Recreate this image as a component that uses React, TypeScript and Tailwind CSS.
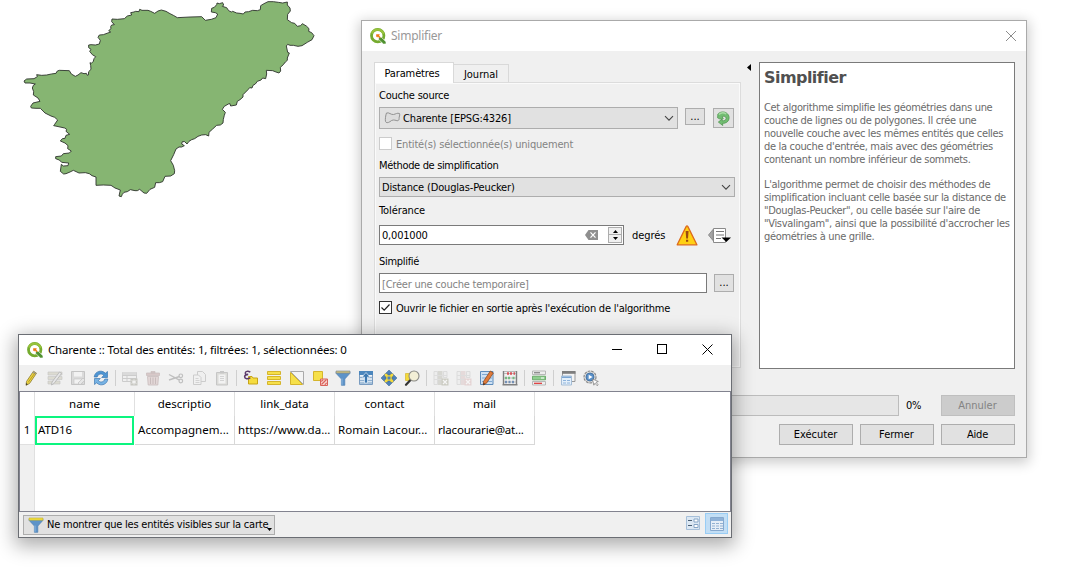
import type { ReactNode } from 'react';

const G = '#9a9a9a';

function Svg({ children, className = 'size-4', vb = '0 0 16 16' }: { children: ReactNode; className?: string; vb?: string }) {
  return (
    <svg viewBox={vb} className={`shrink-0 ${className}`} fill="none">
      {children}
    </svg>
  );
}

function Logo() {
  return (
    <Svg>
      <circle cx="7.7" cy="7.7" r="6.2" stroke="#75ab2f" strokeWidth="2.800" />
      <path d="M1.900 5.500A6.200 6.200 0 0 1 13.600 6" stroke="#98c23c" strokeWidth="2.200" />
      <path d="M8.600 9.200h2.700l4.700 4.600V16h-2.600L8.600 11.400z" fill="#4f9130" stroke="#fff" strokeWidth=".6" />
      <path d="M6.200 6.200h3l.8.9-1.100.4 1.800 1.800-1 1-1.800-1.800-.6 1.100-1.100-1z" fill="#ee7913" />
    </Svg>
  );
}

function CharenteMap() {
  return (
    <svg viewBox="0 0 960 615" className="block h-[205px] w-[320px]">
      <path
        fill="#86b572"
        stroke="#2e332c"
        strokeWidth="2.700"
        strokeLinejoin="round"
        d="M42 243L50 237L72 236L82 230L80 224L95 226L110 225L124 222L138 220L142 213L148 211L178 212L184 222L196 229L204 225L213 218L222 221L229 220L232 226L235 225L236 215L243 208L242 196L240 188L244 190L250 184L252 176L257 170L247 164L239 154L243 148L236 143L236 135L243 134L256 135L268 132L271 121L264 112L268 105L280 104L288 101L302 96L296 92L303 86L302 80L305 75L313 74L305 65L306 57L322 58L343 56L352 48L365 45L362 38L372 36L377 34L387 35L389 28L396 31L414 31L422 34L434 40L444 33L454 30L468 34L480 41L490 46L502 53L540 51L575 50L586 61L604 58L618 53L623 42L616 38L604 36L605 25L613 22L620 14L621 9L628 11L638 8L641 15L637 19L650 23L656 32L664 36L668 34L680 39L690 40L700 42L705 36L716 35L728 31L742 32L751 29L752 17L762 11L774 5L790 5L805 7L818 9L832 6L832 15L840 24L841 33L833 43L832 59L845 68L854 70L862 79L872 77L877 71L889 78L897 86L896 94L905 98L912 107L906 119L892 127L876 137L864 139L850 136L840 136L833 133L829 138L833 157L838 159L832 174L832 181L826 186L820 194L811 202L812 213L807 219L798 216L788 212L769 211L770 222L767 236L758 234L753 240L742 244L736 252L729 256L726 264L719 263L714 269L699 284L699 291L690 299L682 304L679 315L662 318L660 311L655 312L643 319L637 328L646 337L643 346L640 358L639 369L631 375L620 376L608 387L597 397L596 408L587 404L575 405L564 409L554 416L545 419L537 424L531 432L524 425L517 425L515 432L523 437L515 441L507 441L498 447L491 464L482 482L490 496L494 512L493 521L482 528L465 529L458 545L448 548L437 548L434 562L420 568L410 580L402 579L389 568L382 572L375 572L361 569L352 575L342 577L337 583L334 590L327 588L331 570L315 564L303 556L280 555L258 556L258 531L246 527L238 521L226 518L207 519L190 511L180 516L168 521L161 522L151 514L154 493L160 498L174 497L176 489L155 487L148 480L137 476L137 470L154 468L160 461L178 459L184 453L173 446L174 437L165 429L151 423L157 416L165 415L168 406L179 403L168 394L170 388L164 384L141 379L131 377L134 373L143 360L134 352L123 348L105 339L91 325L78 325L64 324L62 319L69 309L90 304L84 294L70 285L71 275L67 264L70 256L76 252L60 249L45 249Z"
      />
    </svg>
  );
}

function Chevron() {
  return (
    <Svg className="h-[7px] w-[10px]" vb="0 0 10 7">
      <path d="M1 1.2l4 4 4-4" stroke="#444" strokeWidth="1.1" />
    </Svg>
  );
}

function PushButton({ label, disabled = false, track = '' }: { label: string; disabled?: boolean; track?: string }) {
  return (
    <div
      className={`flex h-[21px] w-[74px] items-center justify-center border pr-px pt-px ${track} ${
        disabled ? 'border-[#bfbfbf] bg-[#cccccc] text-[#838383]' : 'border-[#adadad] bg-[#e1e1e1]'
      }`}
    >
      {label}
    </div>
  );
}

function SimplifyDialog() {
  return (
    <div className="absolute left-[361px] top-[20px] flex h-[438px] w-[666px] flex-col border border-[#aaaaaa] bg-[#f0f0f0] font-['DejaVu_Sans_Condensed','DejaVu_Sans',sans-serif] text-[11px] leading-[14px] text-black shadow-[0_3px_12px_2px_rgba(0,0,0,0.2)]">
      <div className="flex h-[30px] shrink-0 items-center bg-white pl-2 pr-[9px]">
        <Logo />
        <span className="ml-[5px] font-['Noto_Sans',sans-serif] text-[12px] tracking-[-0.24px] text-[#999]">Simplifier</span>
        <Svg className="ml-auto h-[12px] w-[12px]" vb="0 0 12 12">
          <path d="M1 1l10 10M11 1L1 11" stroke="#8c8c8c" />
        </Svg>
      </div>
      <div className="flex pl-[12px] pt-[11px]">
        <div className="flex w-[367px] flex-col">
          <div className="flex h-[21px] items-end">
            <div className="z-10 flex h-[21px] w-[80px] items-center justify-center border border-b-0 border-[#d9d9d9] bg-white pr-[4px] pt-px tracking-[-0.12px]">
              Paramètres
            </div>
            <div className="flex h-[19px] w-[55px] items-center justify-center border border-b-0 border-l-0 border-[#d9d9d9] pt-px">Journal</div>
          </div>
          <div className="-mt-px flex h-[286px] flex-col border border-[#dcdcdc] pl-[4px] shadow-[inset_0_0_0_1px_#fafafa]">
            <span className="mt-[6px] tracking-[-0.22px]">Couche source</span>
            <div className="mt-[4px] flex h-[22px]">
              <div className="flex h-[22px] w-[299px] items-center border border-[#adadad] bg-[#e1e1e1] pl-1 pr-[3px]">
                <Svg className="h-[13px] w-[17px]" vb="0 0 17 13">
                  <path d="M2.5 1C5 0 7 3 9.500 2.500S13 .700 15.500 1.500c.8 2-.6 3-.4 5 .2 1.300-.8 2.500-2.200 2.200-3-1-4.500-1.200-7 1C4 11 2 11 1.500 9.500c-.5-2 .2-6.500 1-8.500z" fill="#dcdcdc" stroke="#919191" />
                </Svg>
                <span className="ml-[2px] mt-[2px] flex-1 tracking-[-0.15px]">Charente [EPSG:4326]</span>
                <Chevron />
              </div>
              <div className="ml-[7px] mt-px flex h-[17px] w-[20px] items-center justify-center border border-[#adadad] bg-[#e1e1e1]">...</div>
              <div className="ml-[8px] mt-px flex h-[20px] w-[21px] items-center justify-center border border-[#adadad] bg-[#e1e1e1]">
                <Svg className="size-[15px]">
                  <path d="M2 3.200C4.500.6 8.500.4 11 2c3.800 2.300 4 7.500.5 10-1.300.9-3 1.200-4.500 1.200l.2 2.300L2.500 11.800 6.500 8.600l.2 1.900c2.200 0 4-.8 4.100-2.600C10.900 5.800 8.500 4.900 6.500 6.200l1.300 1.900C5.500 8.900 3.200 8.600 1.700 7.300z" fill="#72bd72" stroke="#4c944c" strokeWidth=".8" />
                  <path d="M3 3.800C5.300 1.600 8.500 1.600 10.800 3.200" stroke="#a9dca6" strokeWidth="1.400" />
                </Svg>
              </div>
            </div>
            <div className="mt-[8px] flex h-[13px] items-center text-[#838383]">
              <div className="size-[13px] border border-[#cccccc] bg-white" />
              <span className="ml-[4px] pt-[2px] tracking-[-0.19px]">Entité(s) sélectionnée(s) uniquement</span>
            </div>
            <span className="mt-[9px] tracking-[-0.34px]">Méthode de simplification</span>
            <div className="mt-[4px] flex h-[20px] w-[356px] items-center border border-[#adadad] bg-[#e1e1e1] pl-[2px] pr-[3px]">
              <span className="mt-[2px] flex-1 tracking-[-0.16px]">Distance (Douglas-Peucker)</span>
              <Chevron />
            </div>
            <span className="mt-[7px] tracking-[-0.1px]">Tolérance</span>
            <div className="mt-[7px] flex h-[20px] items-center">
              <div className="flex h-[20px] w-[245px] items-center border border-[#7a7a7a] bg-white pl-[2px] pr-px">
                <span className="mt-[2px] flex-1 tracking-[-0.2px]">0,001000</span>
                <Svg className="mr-[10px] h-[10px] w-[13px]" vb="0 0 13 10">
                  <path d="M0 5l3.500-5H13v10H3.500z" fill="#8f8f8f" />
                  <path d="M5.500 2.300l5 5.400M10.500 2.300l-5 5.400" stroke="#fff" strokeWidth="1.200" />
                </Svg>
                <div className="flex h-[16px] w-[14px] flex-col border border-[#adadad] bg-[#f0f0f0]">
                  <div className="flex h-[7px] items-center justify-center border-b border-[#adadad]">
                    <Svg className="h-[3px] w-[5px]" vb="0 0 5 3"><path d="M0 3L2.500 0 5 3z" fill="#000" /></Svg>
                  </div>
                  <div className="flex flex-1 items-center justify-center">
                    <Svg className="h-[3px] w-[5px]" vb="0 0 5 3"><path d="M0 0h5L2.500 3z" fill="#000" /></Svg>
                  </div>
                </div>
              </div>
              <span className="ml-[8px] mt-[2px] w-[33px] tracking-[-0.05px]">degrés</span>
              <Svg className="ml-[11px] h-[21px] w-[22px]" vb="0 0 22 21">
                <path d="M1.200 19.800L10.100 1.600Q11 .2 11.900 1.600L20.900 19.800z" fill="#ffd013" stroke="#dd6a1c" strokeWidth="1.300" strokeLinejoin="round" />
                <path d="M9.600 6h3l-.6 7.500h-1.800zM10 14.800h2.200v2H10z" fill="#9c4a10" />
              </Svg>
              <Svg className="ml-[10px] h-[17px] w-[23px]" vb="0 0 23 17">
                <path d="M.5 8l4.500-5.500v11z" fill="#a5a5a5" stroke="#8e8e8e" />
                <path d="M5.500 1.500h12v14h-12z" fill="#fff" stroke="#8a8a8a" />
                <path d="M8 4.500h8M8 8h8M8 11.500h5" stroke="#777" strokeWidth="1.200" />
                <path d="M13.500 10.500h9.500l-4.700 4.500z" fill="#000" />
              </Svg>
            </div>
            <span className="mt-[10px] tracking-[-0.3px]">Simplifié</span>
            <div className="mt-[4px] flex h-[20px] items-center">
              <div className="flex h-[20px] w-[328px] items-center border border-[#7a7a7a] bg-white pl-[2px] pt-[3px] tracking-[-0.22px] text-[#838383]">
                [Créer une couche temporaire]
              </div>
              <div className="ml-[7px] flex h-[18px] w-[20px] items-center justify-center border border-[#adadad] bg-[#e1e1e1]">...</div>
            </div>
            <div className="mt-[8px] flex h-[13px] items-center">
              <div className="flex size-[13px] items-center justify-center border border-[#333] bg-white">
                <Svg className="size-[11px]" vb="0 0 11 11"><path d="M1.500 5.500l2.700 2.700L9.500 2.500" stroke="#222" strokeWidth="1.200" /></Svg>
              </div>
              <span className="ml-[4px] whitespace-nowrap pt-[2px] tracking-[-0.24px]">Ouvrir le fichier en sortie après l'exécution de l'algorithme</span>
            </div>
          </div>
        </div>
        <Svg className="ml-[6px] mt-[2px] h-[7px] w-[4px]" vb="0 0 4 7"><path d="M4 0v7L0 3.500z" fill="#000" /></Svg>
        <div className="ml-[8px] h-[307px] w-[256px] border border-[#7a7a7a] bg-white pl-[4px] text-[#6a6a6a]">
          <h1 className="mt-[5px] font-['DejaVu_Sans',sans-serif] text-[16px] font-bold leading-[20px] tracking-[-0.55px] text-[#505050]">Simplifier</h1>
          <p className="mt-[13px] whitespace-nowrap leading-[13px] tracking-[-0.32px]">
            Cet algorithme simplifie les géométries dans une<br />
            couche de lignes ou de polygones. Il crée une<br />
            nouvelle couche avec les mêmes entités que celles<br />
            de la couche d'entrée, mais avec des géométries<br />
            contenant un nombre inférieur de sommets.
          </p>
          <p className="mt-[12px] whitespace-nowrap leading-[13px] tracking-[-0.32px]">
            L'algorithme permet de choisir des méthodes de<br />
            simplification incluant celle basée sur la distance de<br />
            "Douglas-Peucker", ou celle basée sur l'aire de<br />
            "Visvalingam", ainsi que la possibilité d'accrocher les<br />
            géométries à une grille.
          </p>
        </div>
      </div>
      <div className="mt-[26px] flex items-center pl-[12px] pr-[11px]">
        <div className="h-[21px] flex-1 border border-[#bcbcbc] bg-[#e6e6e6]" />
        <span className="ml-[7px] w-[35px] pt-px tracking-[-0.2px]">0%</span>
        <PushButton label="Annuler" disabled />
      </div>
      <div className="mt-[8px] flex justify-end gap-[7px] pr-[11px]">
        <PushButton label="Exécuter" />
        <PushButton label="Fermer" />
        <PushButton label="Aide" track="tracking-[-0.2px]" />
      </div>
    </div>
  );
}

function PencilIcon() {
  return (
    <Svg>
      <path d="M2.500 11.500L9.500 1.200l3 2L5.500 13.500 2 15.300z" fill="#ecd53f" stroke="#8d7a2e" strokeWidth=".8" />
      <path d="M9.500 1.200l3 2-1.100 1.600-3-2z" fill="#9b9b90" />
      <path d="M4.200 12.300L11 2.800" stroke="#b89b2a" />
      <path d="M2 15.300l.3-2.200 1.500 1.200z" fill="#333" />
    </Svg>
  );
}

function MultiEditIcon() {
  return (
    <Svg className="size-4 opacity-50">
      <path d="M1 2h14v3H1zM1 6.500h14v3H1zM1 11h12v3H1z" fill="#c9c7b4" stroke={G} strokeWidth=".6" />
      <path d="M5 12L12.500 2l2 1.500L7 13.500 4.500 15z" fill="#ddd" stroke="#777" strokeWidth=".8" />
    </Svg>
  );
}

function SaveIcon() {
  return (
    <Svg className="size-4 opacity-50">
      <path d="M1.500 1.500h13v13h-13z" fill="#c5c5c5" stroke="#999" />
      <path d="M4 2h8v4.500H4z" fill="#f5f5f5" />
      <path d="M4 9h8v5H4z" fill="#f5f5f5" stroke={G} strokeWidth=".6" />
      <path d="M8 13l5-5 2 2-5 5z" fill="#ddd" stroke="#888" strokeWidth=".6" />
    </Svg>
  );
}

function ReloadIcon() {
  return (
    <Svg>
      <path d="M1.200 7C1.500 3 5 .8 8.500 1.200c1.700.2 3 1 3.800 2L14.500 1.500V7.500H8.700l2-2.200C9 3.300 5 3.500 4.200 7z" fill="#4e95d3" stroke="#2f6ba8" strokeWidth=".6" />
      <path d="M14.800 9C14.500 13 11 15.200 7.500 14.800c-1.700-.2-3-1-3.800-2L1.500 14.500V8.500h5.800l-2 2.200c1.700 2 5.700 1.800 6.500-1.700z" fill="#77b3e4" stroke="#2f6ba8" strokeWidth=".6" />
    </Svg>
  );
}

function AddRowIcon() {
  return (
    <Svg className="size-4 opacity-40">
      <path d="M.5 2.500h14v9H.5zM.5 5.500h14M.5 8.500h14M5 5v6" stroke="#999" fill="#eee" />
      <path d="M.5 2h14v3H.5z" fill="#bbb" />
      <path d="M8.500 8.500h7v7h-7z" fill="#8d8d80" />
      <path d="M12 9.500v5M9.700 10.700l4.600 2.600M14.300 10.700l-4.600 2.600" stroke="#fff" />
    </Svg>
  );
}

function TrashIcon() {
  return (
    <Svg className="size-4 opacity-40">
      <path d="M1.500 3h13v2.500h-13zM6 1.500h4V3H6z" fill="#b58f8f" stroke="#8e7070" strokeWidth=".7" />
      <path d="M2.500 6.500h11l-.7 8.500H3.200z" fill="#cfb2b2" stroke="#8e7070" strokeWidth=".8" />
      <path d="M5.500 7.500v6.500M8 7.500v6.500M10.500 7.500v6.500" stroke="#8e7070" />
    </Svg>
  );
}

function ScissorsIcon() {
  return (
    <Svg className="size-4 opacity-40">
      <path d="M1 4.500l10 5.300M1 10l10.500-3.500" stroke="#777" strokeWidth="1.400" />
      <circle cx="12.800" cy="5.800" r="1.800" stroke="#777" strokeWidth="1.200" />
      <circle cx="12.800" cy="11" r="1.800" stroke="#777" strokeWidth="1.200" />
    </Svg>
  );
}

function CopyIcon() {
  return (
    <Svg className="size-4 opacity-40">
      <path d="M6.500 1.500h5l3 3v7h-8z" fill="#eee" stroke="#999" />
      <path d="M2.500 5h5l2.500 2.500v7h-7.500z" fill="#f3f3f3" stroke="#999" />
      <path d="M4.500 8.500h3M4.500 10.500h4M4.500 12.500h4" stroke="#aaa" />
    </Svg>
  );
}

function PasteIcon() {
  return (
    <Svg className="size-4 opacity-40">
      <path d="M2.500 2.500h11v12.500h-11z" fill="#bdbdb5" stroke="#888" />
      <path d="M4.500 4.500h7v9h-7z" fill="#f5f5f5" />
      <path d="M6 1h4v2.500H6z" fill="#888" />
      <path d="M6 6.500h4M6 8.500h4M6 10.500h4" stroke="#aaa" />
    </Svg>
  );
}

function ExpressionIcon() {
  return (
    <Svg>
      <path d="M5.500 6.500h3.500l1 1.500h4.500v6h-9z" fill="#f5dc3f" stroke="#c7a518" />
      <path d="M7.300 2.200C5 .6 2.300 1.300 2.300 3c0 1.300 1.300 1.700 2.900 1.600C3.200 4.700 1.600 5.200 1.600 6.800 1.600 9 5 9.300 7.300 7.600" stroke="#5d3a6b" strokeWidth="1.500" />
    </Svg>
  );
}

function SelectAllIcon() {
  return (
    <Svg>
      <path d="M1.500 1.500h13v3h-13zM1.500 6.500h13v3h-13zM1.500 11.500h13v3h-13z" fill="#f6e04a" stroke="#d5b52c" />
    </Svg>
  );
}

function InvertIcon() {
  return (
    <Svg>
      <path d="M1.500 1.500h13v13z" fill="#f4f4f4" stroke="#aaa" />
      <path d="M1.500 2.500v12h12z" fill="#f6e04a" stroke="#d5b52c" />
    </Svg>
  );
}

function DeselectIcon() {
  return (
    <Svg>
      <path d="M1.500 1.500h9v9h-9z" fill="#f6e04a" stroke="#d5b52c" />
      <path d="M8.500 9h7v6.500h-7z" fill="#f8d5d2" stroke="#d9635b" />
      <path d="M9.500 14.500l5-5M9.300 11.500l1.900-1.900M12.800 14.800l1.900-1.900" stroke="#d9635b" strokeWidth="1.100" />
    </Svg>
  );
}

function FilterIcon({ yellow = false }: { yellow?: boolean }) {
  return (
    <Svg>
      <path d="M1.200 2h13.600v1.500L9.800 9v6.300H6.400V9L1.200 3.500z" fill="#5d93c8" stroke="#4d7fb2" strokeWidth=".7" />
      <path d="M7 8.500v6.300" stroke="#8db8e0" />
      <path d="M1 1h14v2.200H1z" fill={yellow ? '#f4e23c' : '#cfc07c'} stroke={yellow ? '#b8a838' : '#6e7f92'} strokeWidth=".6" />
    </Svg>
  );
}

function MoveTopIcon() {
  return (
    <Svg>
      <path d="M1.500 1.500h13v13h-13z" fill="#eef4fa" stroke="#7a9cc0" />
      <path d="M1 1h14v4H1z" fill="#4b86bd" />
      <path d="M2 7.500h12M2 10.500h12M2 13h12" stroke="#8fb0d0" strokeWidth="1.500" />
      <path d="M8 2.500L12 7H9.500v6h-3V7H4z" fill="#3c78b0" stroke="#e6f0fa" strokeWidth=".7" />
    </Svg>
  );
}

function PanIcon() {
  return (
    <Svg>
      <path d="M3.500 3.500h9v9h-9z" fill="#f4da3c" />
      <path d="M8 0l3.500 3.500H9.200V5H6.800V3.500H4.500zM8 16l-3.500-3.500h2.300V11h2.400v1.500h2.300zM0 8l3.500-3.500v2.300H5v2.400H3.500v2.300zM16 8l-3.500 3.500V9.200H11V6.800h1.500V4.500z" fill="#4d82ba" stroke="#38618f" strokeWidth=".5" />
      <path d="M6.500 6.500h3v3h-3z" fill="#4d82ba" />
    </Svg>
  );
}

function ZoomIcon() {
  return (
    <Svg>
      <path d="M1.500 3.500h6v7h-6z" fill="#f4da3c" stroke="#d0ae1e" strokeWidth=".6" />
      <path d="M6.500 10L2 14.800" stroke="#333" strokeWidth="2.200" strokeLinecap="round" />
      <circle cx="10" cy="6" r="5" fill="#f3efd6" stroke="#8b8b86" strokeWidth="1.100" />
    </Svg>
  );
}

function FieldIcon({ remove = false }: { remove?: boolean }) {
  return (
    <Svg className="size-4 opacity-35">
      <path d="M1 1.500h3.500v13H1zM10.500 1.500H14v6h-3.500z" fill="#e9e9e9" stroke="#aaa" strokeWidth=".8" />
      <path d="M5 1h4.500v14H5z" fill={remove ? '#d3b4b4' : '#abab9d'} />
      <path d="M1 5.500h13M1 9.500h8" stroke="#bbb" />
      <path d="M8.500 8.500h7v7h-7z" fill={remove ? '#d3a3a3' : '#8f8f74'} />
      <path d="M10 10l4 4M14 10l-4 4" stroke="#fff" strokeWidth="1.300" />
    </Svg>
  );
}

function EditFieldIcon() {
  return (
    <Svg>
      <path d="M1.500 1.500h12.500v13H1.500z" fill="#cfe1f3" stroke="#5d8cbc" />
      <path d="M3 4.500h10M3 8h10M3 11.500h10" stroke="#7fa8d2" strokeWidth="1.200" />
      <path d="M4.500 11.500L11.300 1l3 2L7.500 13.200 4.300 15z" fill="#e07a3a" stroke="#8b4a22" strokeWidth=".8" />
      <path d="M4.300 15l.3-2 1.500 1z" fill="#222" />
    </Svg>
  );
}

function AbacusIcon() {
  return (
    <Svg>
      <path d="M1.500 1v14M14.500 1v14M.5 14.800h15" stroke="#808080" strokeWidth="1.400" />
      <path d="M2 1.500h12M2 3.500h12M2 8h12M2 12h12" stroke="#aaa" strokeWidth=".8" />
      <path d="M5 2.200h2v2.600H5zM8 2.200h2v2.600H8zM11.500 2.200H13v2.600h-1.500z" fill="#d8535a" />
      <path d="M3 6.700h2v2.600H3zM6 6.700h2v2.600H6zM10.500 6.700h2v2.600h-2z" fill="#77b981" />
      <path d="M3 10.800h2v2.400H3zM6.500 10.800h2v2.400h-2zM10 10.800h2v2.400h-2z" fill="#7490b5" />
    </Svg>
  );
}

function ConditionalIcon() {
  return (
    <Svg>
      <path d="M1.500 1h13v3.500h-13zM1.500 11.500h13V15h-13z" fill="#eee" stroke="#aaa" strokeWidth=".8" />
      <path d="M1.500 6.200h13v3.600h-13z" fill="#8fce8f" stroke="#5aa05a" strokeWidth=".8" />
      <path d="M3 2.800h6" stroke="#666" />
      <path d="M10 8h3" stroke="#fff" />
      <path d="M3 13.300h8" stroke="#d33" strokeWidth="1.200" />
    </Svg>
  );
}

function DockIcon() {
  return (
    <Svg>
      <path d="M2.500 1.500h12.500v10H2.500z" fill="#f3f3f3" stroke="#999" />
      <path d="M2 1h13.500v2.800H2z" fill="#7d7d7d" />
      <path d="M1.500 6h10v9h-10z" fill="#e3effa" stroke="#a5bdd6" />
      <path d="M2 6.500h9v1.500H2z" fill="#7ba6d4" />
      <path d="M3 10.500h3M7 10.500h3M3 13h3M7 13h3" stroke="#8fb4dc" />
    </Svg>
  );
}

function ActionIcon() {
  return (
    <Svg>
      <circle cx="7" cy="7" r="6" fill="#d8d8d8" stroke="#8b8b8b" strokeWidth="1.200" strokeDasharray="2.600 1" />
      <circle cx="7" cy="7" r="4" fill="#5b91c9" stroke="#3d6c9d" strokeWidth=".8" />
      <path d="M5.700 4.800L9.500 7 5.700 9.200z" fill="#fff" />
      <path d="M9.500 9l5.800 2.500-2.300.8 2.200 2.600-1 .9-2.200-2.600-1.200 2z" fill="#fff" stroke="#777" strokeWidth=".7" />
    </Svg>
  );
}

const groups: ReactNode[][] = [
  [<PencilIcon />, <MultiEditIcon />, <SaveIcon />, <ReloadIcon />],
  [<AddRowIcon />, <TrashIcon />, <ScissorsIcon />, <CopyIcon />, <PasteIcon />],
  [<ExpressionIcon />, <SelectAllIcon />, <InvertIcon />, <DeselectIcon />, <FilterIcon />, <MoveTopIcon />, <PanIcon />, <ZoomIcon />],
  [<FieldIcon />, <FieldIcon remove />, <EditFieldIcon />, <AbacusIcon />],
  [<ConditionalIcon />],
  [<DockIcon />, <ActionIcon />],
];

const columns = [
  { head: 'name', value: 'ATD16', track: 'tracking-[-0.1px]' },
  { head: 'descriptio', value: 'Accompagnem...', track: 'tracking-[0.05px]' },
  { head: 'link_data', value: 'https://www.da...', track: 'tracking-[0.02px]' },
  { head: 'contact', value: 'Romain Lacour...', track: 'tracking-[0.05px]' },
  { head: 'mail', value: 'rlacourarie@at...', track: 'tracking-[-0.2px]' },
];

function AttributeTable() {
  return (
    <div className="absolute left-[18px] top-[334px] flex h-[204px] w-[714px] flex-col border border-[#6b6e74] bg-[#f0f0f0] font-['Noto_Sans',sans-serif] text-[11.5px] leading-[14px] text-black shadow-[0_5px_18px_3px_rgba(0,0,0,0.32)]">
      <div className="flex h-[30px] shrink-0 items-center bg-white pl-2 pr-[18px]">
        <Logo />
        <span className="ml-[5px] tracking-[-0.19px]">Charente :: Total des entités: 1, filtrées: 1, sélectionnées: 0</span>
        <div className="ml-auto flex items-center gap-[35px] pb-[2px]">
          <div className="h-px w-[10px] bg-black" />
          <div className="size-[10px] border border-black" />
          <Svg className="size-[11px]" vb="0 0 11 11"><path d="M.5.5l10 10M10.500.5l-10 10" stroke="#000" /></Svg>
        </div>
      </div>
      <div className="flex h-[26px] shrink-0 items-center pl-[1px]">
        {groups.map((icons, g) => (
          <div key={g} className="flex items-center">
            {g > 0 && (
              <div className="flex w-[6px] justify-center">
                <div className="h-[16px] w-px bg-[#cfcfcf]" />
              </div>
            )}
            {icons.map((icon, i) => (
              <div key={i} className="flex w-[23px] justify-center">{icon}</div>
            ))}
          </div>
        ))}
      </div>
      <div className="flex h-[121px] shrink-0 border border-[#82838f] bg-white">
        <div className="flex w-[15px] flex-col border-r border-[#e0e0e0] bg-[#f0f0f0]">
          <div className="h-[24px] bg-white" />
          <div className="flex h-[29px] items-center justify-center border-b border-[#e0e0e0] bg-white">1</div>
        </div>
        {columns.map((c, i) => (
          <div key={c.head} className="flex w-[100px] flex-col">
            <div className="flex h-[24px] items-center justify-center border-r border-[#e0e0e0]">{c.head}</div>
            <div
              className={`flex h-[29px] items-center whitespace-nowrap ${c.track} ${
                i === 0 ? 'mr-px border-2 border-[#0cf57f] pb-px pl-px' : 'border-b border-r border-[#d8d8d8] pl-[3px]'
              }`}
            >
              {c.value}
            </div>
          </div>
        ))}
      </div>
      <div className="flex flex-1 items-center pl-[4px] pr-[3px]">
        <div className="flex h-[20px] w-[252px] items-center border border-[#adadad] bg-[#e1e1e1] pl-[4px] font-['DejaVu_Sans_Condensed','DejaVu_Sans',sans-serif] text-[11px]">
          <FilterIcon yellow />
          <span className="ml-[3px] mt-px whitespace-nowrap tracking-[-0.22px]">Ne montrer que les entités visibles sur la carte</span>
          <Svg className="-ml-px mt-[10px] h-[3px] w-[5px]" vb="0 0 5 3"><path d="M0 0h5L2.500 3z" fill="#000" /></Svg>
        </div>
        <Svg className="mb-[3px] ml-auto size-[14px]" vb="0 0 14 14">
          <path d="M.5.5h13v13H.5z" fill="#dbe7f3" stroke="#a6bfd9" />
          <path d="M2 4.500h4M2 9.500h4" stroke="#4a5f73" strokeWidth="1.200" />
          <path d="M8 3h4v3H8zM8 8.500h4v3H8z" fill="#fff" stroke="#86a5c6" />
        </Svg>
        <div className="mb-[3px] ml-[5px] flex h-[21px] w-[23px] items-center justify-center border border-[#99cdf5] bg-[#c2def5] pt-[2px]">
          <Svg className="size-[14px]" vb="0 0 14 14">
            <path d="M.5.5h13v13H.5z" fill="#e6eef7" stroke="#86a9cf" />
            <path d="M1 1h12v3H1z" fill="#8fb2d8" />
            <path d="M2 6.500h3M6 6.500h3M10 6.500h3M2 9h3M6 9h3M10 9h3M2 11.500h3M6 11.500h3M10 11.500h3" stroke="#93b1d2" />
          </Svg>
        </div>
      </div>
    </div>
  );
}

export default function App() {
  return (
    <main className="relative h-[570px] w-[1075px] overflow-hidden bg-white pl-[10px]">
      <CharenteMap />
      <SimplifyDialog />
      <AttributeTable />
    </main>
  );
}
